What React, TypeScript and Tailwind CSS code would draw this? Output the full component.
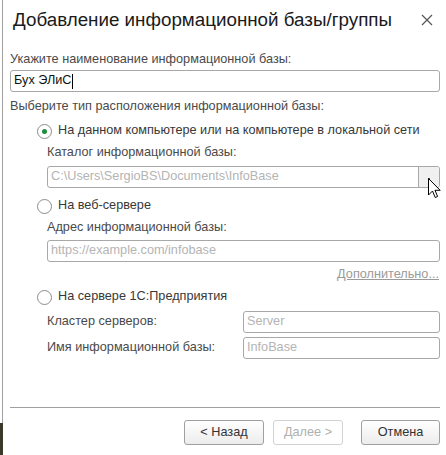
import React from 'react';

const font = { fontFamily: '"Liberation Sans", Arial, sans-serif' };

function Radio({ checked, label }: { checked?: boolean; label: string }) {
    return (
        <div className="flex items-center h-[18px] pl-[27px]">
            <span className="w-[15px] h-[15px] rounded-full border border-[#8c8c8c] bg-white flex items-center justify-center">
                {checked && <span className="w-[5px] h-[5px] rounded-full bg-[#1e8c3e]" />}
            </span>
            <span className="ml-[6px] text-[12.7px] text-[#383838]">{label}</span>
        </div>
    );
}

function Field({ value, placeholder, className = '' }: { value?: string; placeholder?: string; className?: string }) {
    return (
        <div className={`h-[22px] border border-[#a8a8a8] rounded-[3px] bg-white flex items-center px-[3px] text-[12.7px] ${className}`}>
            {value ? <span className="text-[#111]">{value}</span> : <span className="text-[#b4b4b4]">{placeholder}</span>}
        </div>
    );
}

export default function App() {
    return (
        <div className="w-[446px] h-[455px] bg-white flex relative overflow-hidden" style={font}>
            {/* левая кромка окна */}
            <div className="w-[3px] flex flex-col">
                <div className="flex-1 border-r border-[#a0a0a0]" />
                <div className="h-[32px] bg-[#3b3a2a]" />
            </div>

            <div className="flex-1 flex flex-col pl-[7px] pr-[6px]">
                <div className="h-[40px] flex items-center justify-between">
                    <span className="text-[18.8px] text-[#1a1a1a] pl-[3px]">Добавление информационной базы/группы</span>
                    <svg width="12" height="12" viewBox="0 0 12 12" className="mr-[7px]">
                        <path d="M1 1L11 11M11 1L1 11" stroke="#555" strokeWidth="1.2" />
                    </svg>
                </div>

                <div className="mt-[12px] h-[16px] flex items-center text-[12.7px] text-[#4a4a4a]">
                    Укажите наименование информационной базы:
                </div>
                <div className="mt-[2px] h-[22px] border border-[#a8a8a8] rounded-[3px] flex items-center px-[3px] text-[12.7px] text-[#111]">
                    Бух ЭЛиС<span className="w-px h-[15px] bg-black" />
                </div>

                <div className="mt-[7px] h-[16px] flex items-center text-[12.7px] text-[#4a4a4a]">
                    Выберите тип расположения информационной базы:
                </div>

                <div className="mt-[7px]">
                    <Radio checked label="На данном компьютере или на компьютере в локальной сети" />
                </div>
                <div className="pl-[37px]">
                    <div className="mt-[5px] h-[16px] flex items-center text-[12.7px] text-[#4a4a4a]">Каталог информационной базы:</div>
                    <div className="mt-[5px] h-[22px] border border-[#a8a8a8] rounded-[3px] flex text-[12.7px]">
                        <span className="flex-1 flex items-center px-[3px] text-[#b4b4b4]">C:\Users\SergioBS\Documents\InfoBase</span>
                        <span className="w-[21px] bg-[#f0f0f0] border-l border-[#a8a8a8] rounded-r-[3px] flex items-center justify-center">
                            <span className="w-[2px] h-[2px] bg-[#555] mt-[4px]" />
                        </span>
                    </div>
                </div>

                <div className="mt-[9px]">
                    <Radio label="На веб-сервере" />
                </div>
                <div className="pl-[37px]">
                    <div className="mt-[5px] h-[16px] flex items-center text-[12.7px] text-[#4a4a4a]">Адрес информационной базы:</div>
                    <Field placeholder="https://example.com/infobase" className="mt-[4px]" />
                    <div className="mt-[5px] h-[16px] flex items-center justify-end text-[12.7px] text-[#9a9a9a] underline pr-[1px]">
                        Дополнительно...
                    </div>
                </div>

                <div className="mt-[5px]">
                    <Radio label="На сервере 1С:Предприятия" />
                </div>
                <div className="pl-[37px]">
                    <div className="mt-[5px] flex items-center">
                        <span className="w-[196px] text-[12.7px] text-[#4a4a4a]">Кластер серверов:</span>
                        <Field placeholder="Server" className="flex-1" />
                    </div>
                    <div className="mt-[4px] flex items-center">
                        <span className="w-[196px] text-[12.7px] text-[#4a4a4a]">Имя информационной базы:</span>
                        <Field placeholder="InfoBase" className="flex-1" />
                    </div>
                </div>

                <div className="mt-[48px] h-px bg-[#a0a0a0]" />

                <div className="mt-[12px] flex justify-end gap-[9px] text-[12.7px]">
                    <button className="w-[80px] h-[25px] rounded-[3px] border border-[#a0a0a0] bg-gradient-to-b from-white to-[#ececec] text-[#333]">
                        &lt; Назад
                    </button>
                    <button className="w-[70px] h-[25px] rounded-[3px] border border-[#d2d2d2] bg-white text-[#b0b0b0] mr-[9px]">
                        Далее &gt;
                    </button>
                    <button className="w-[79px] h-[25px] rounded-[3px] border border-[#a0a0a0] bg-gradient-to-b from-white to-[#ececec] text-[#333]">
                        Отмена
                    </button>
                </div>
            </div>

            {/* курсор мыши */}
            <svg className="absolute left-[428px] top-[178px]" width="13" height="21" viewBox="0 0 13 21">
                <path d="M0.5 0.5V17L4.5 13L7.2 19.5L9.6 18.5L7 12.3H12.2Z" fill="white" stroke="black" strokeWidth="1" strokeLinejoin="miter" />
            </svg>
        </div>
    );
}
